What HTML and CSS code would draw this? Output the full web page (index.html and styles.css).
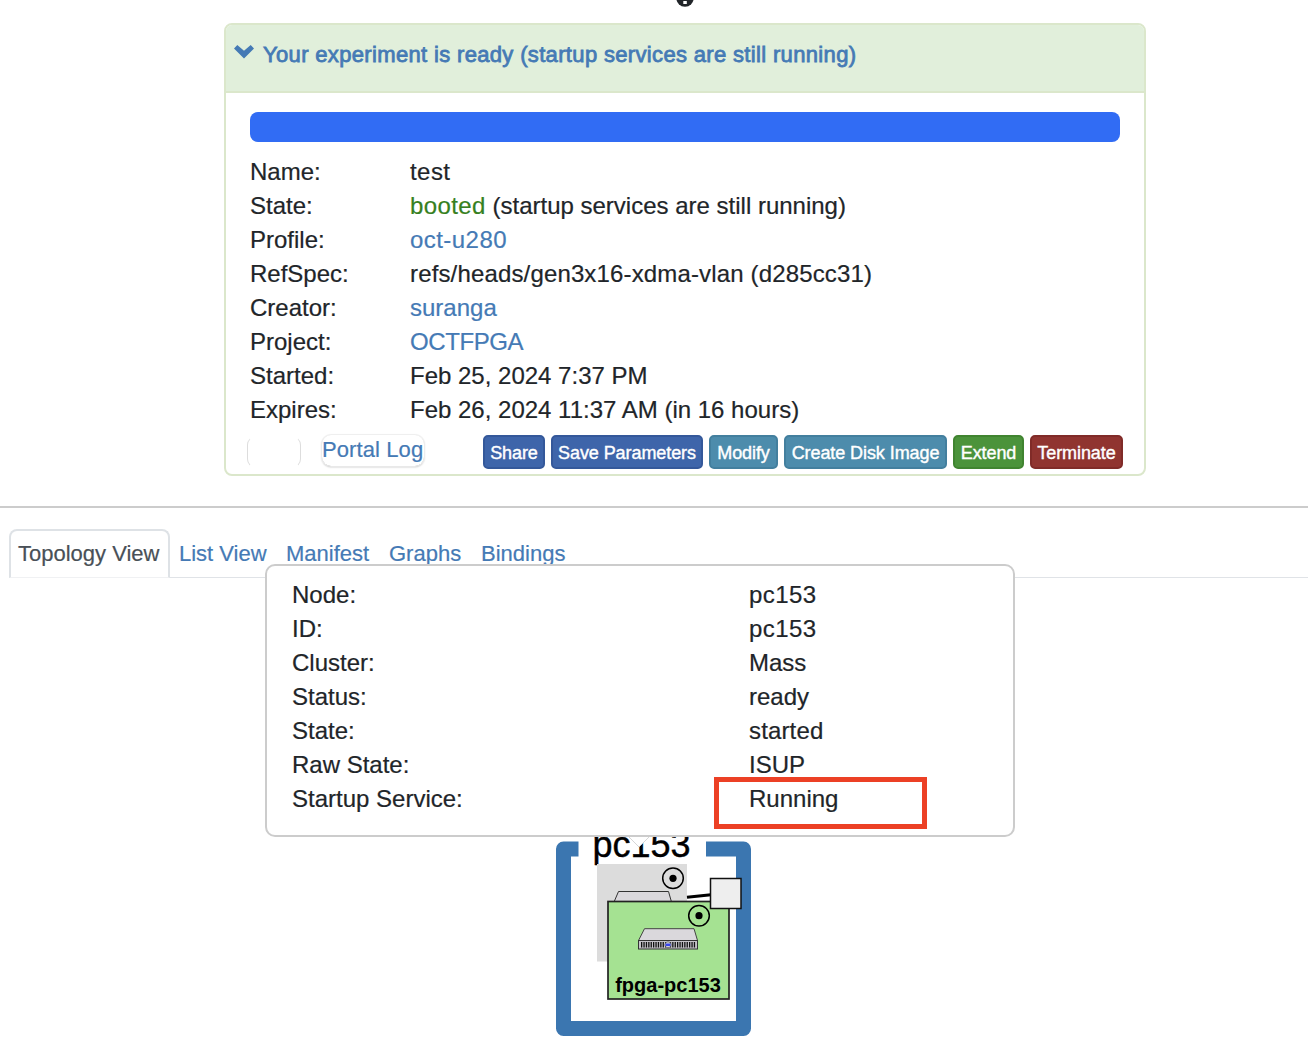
FILE: index.html
```html
<!DOCTYPE html>
<html lang="en">
<head>
<meta charset="utf-8">
<title>Experiment status</title>
<link rel="stylesheet" href="styles.css">
</head>
<body>
<header class="top">
  <svg class="info" width="18" height="8" viewBox="0 0 18 8"><circle cx="9" cy="-2" r="8.7" fill="#212529"/><rect x="7.3" y="1" width="3.5" height="3" fill="#fff"/></svg>
</header>
<section class="panel">
  <div class="panel-heading">
    <svg class="chevron" width="20" height="14" viewBox="0 0 20 14"><path d="M0 3.500 3.300 0 10 5.800 16.700 0 20 3.500 10 13.500Z" fill="#457ab5"/></svg>
    <a class="title">Your experiment is ready (startup services are still running)</a>
  </div>
  <div class="panel-body">
    <div class="progress"></div>
    <dl class="facts">
      <dt>Name:</dt><dd class="loose">test</dd>
      <dt>State:</dt><dd><span class="booted">booted</span> (startup services are still running)</dd>
      <dt>Profile:</dt><dd class="loose"><a>oct-u280</a></dd>
      <dt>RefSpec:</dt><dd class="spaced">refs/heads/gen3x16-xdma-vlan (d285cc31)</dd>
      <dt>Creator:</dt><dd><a>suranga</a></dd>
      <dt>Project:</dt><dd class="tight"><a>OCTFPGA</a></dd>
      <dt>Started:</dt><dd>Feb 25, 2024 7:37 PM</dd>
      <dt>Expires:</dt><dd>Feb 26, 2024 11:37 AM (in 16 hours)</dd>
    </dl>
    <div class="actions">
      <span class="blank"></span>
      <a class="log">Portal Log</a>
      <div class="buttons">
        <button class="btn primary w-share">Share</button>
        <button class="btn primary w-save">Save Parameters</button>
        <button class="btn info-btn w-modify">Modify</button>
        <button class="btn info-btn w-disk">Create Disk Image</button>
        <button class="btn success w-extend">Extend</button>
        <button class="btn danger w-term">Terminate</button>
      </div>
    </div>
  </div>
</section>
<hr class="rule">
<nav class="tabs">
  <a class="tab active">Topology View</a>
  <a class="tab w-list">List View</a>
  <a class="tab w-manifest">Manifest</a>
  <a class="tab w-graphs">Graphs</a>
  <a class="tab">Bindings</a>
</nav>
<main class="canvas">
  <svg class="topology" width="200" height="218" viewBox="553 826 200 218">
    <path d="M578.5 849H563.500V1028.500H743.500V849H706" fill="none" stroke="#3b76b0" stroke-width="15" stroke-linejoin="round"/>
    <text x="592.500" y="857" class="site">pc153</text>
    <rect x="597" y="864" width="90" height="97.500" fill="#dcdcdc"/>
    <path d="M614 902 618.500 891.500H668.500L671.500 902" fill="#dad8dc" stroke="#333" stroke-width="1"/>
    <circle cx="673" cy="878.300" r="10.300" fill="none" stroke="#000" stroke-width="1.500"/><circle cx="673" cy="878.300" r="3.600"/>
    <path d="M687 897.300 711 894.800" stroke="#000" stroke-width="3"/>
    <rect x="608" y="901.500" width="121" height="97.500" fill="#a5e292" stroke="#222" stroke-width="1.700"/>
    <rect x="710.500" y="878.500" width="30.500" height="30" fill="#eee" stroke="#111" stroke-width="1.500"/>
    <circle cx="699" cy="915.700" r="10.300" fill="none" stroke="#000" stroke-width="1.500"/><circle cx="699" cy="915.700" r="3.600"/>
    <path d="M638.500 940.500 644.500 928.700H694L697.500 940.500Z" fill="#dad8dc" stroke="#444" stroke-width="1"/>
    <rect x="638.500" y="940.500" width="59" height="8.500" fill="#c5c3c9" stroke="#333" stroke-width="1"/>
    <path d="M641 944.800H695.500" stroke="#111" stroke-width="5.500" stroke-dasharray="1.300 1.100"/>
    <circle cx="668" cy="944.800" r="3" fill="#ddd" stroke="#222" stroke-width=".5"/><path d="M665.500 944.800H670.500" stroke="#3944ef" stroke-width="2.600"/>
    <text x="668" y="992" class="node">fpga-pc153</text>
  </svg>
  <div class="popover">
    <dl class="node-facts">
      <dt>Node:</dt><dd class="loose">pc153</dd>
      <dt>ID:</dt><dd class="loose">pc153</dd>
      <dt>Cluster:</dt><dd>Mass</dd>
      <dt>Status:</dt><dd>ready</dd>
      <dt>State:</dt><dd class="spaced">started</dd>
      <dt>Raw State:</dt><dd>ISUP</dd>
      <dt>Startup Service:</dt><dd>Running</dd>
    </dl>
    <span class="highlight"></span>
    <svg class="arrow" width="24" height="11" viewBox="0 0 24 11"><path d="M2 0 12 10 22 0Z" fill="#fff"/><path d="M2 0 12 10 22 0" fill="none" stroke="#ccc" stroke-width=".8"/></svg>
  </div>
</main>
</body>
</html>
```
FILE: styles.css
```css
* { box-sizing: border-box; }
body {
  margin: 0;
  height: 1048px;
  overflow: hidden;
  background: #fff;
  color: #212529;
  font: 24px/34px "Liberation Sans", Arial, sans-serif;
  -webkit-text-stroke: .2px currentColor;
}
a { color: #457ab5; }
dl, dd { margin: 0; }
.top { height: 23px; }
.info { display: block; margin-left: 676px; }
.panel {
  width: 922px;
  height: 453px;
  margin-left: 224px;
  border: 2px solid #dbe7cb;
  border-radius: 8px;
}
.panel-heading {
  display: flex;
  height: 68px;
  padding: 13px 0 0 8px;
  background: #e1efdb;
  border-bottom: 2px solid #dbe7cb;
  border-radius: 6px 6px 0 0;
}
.chevron { margin: 7px 9px 0 0; }
.title {
  font-size: 22px;
  letter-spacing: .34px;
  white-space: nowrap;
  -webkit-text-stroke: .8px #457ab5;
}
.panel-body { padding: 19px 24px 0; }
.progress {
  height: 30px;
  margin-bottom: 13px;
  border-radius: 8px;
  background: #316cf4;
}
.facts {
  display: grid;
  grid-template-columns: 160px 1fr;
  grid-auto-rows: 34px;
  white-space: nowrap;
}
.spaced { letter-spacing: .15px; }
.loose { letter-spacing: .45px; }
.tight { letter-spacing: -.4px; }
.booted { color: #367f20; letter-spacing: .4px; }
.actions { display: flex; margin: 8px -3px 0; }
.blank {
  width: 54px;
  height: 32px;
  margin-top: 1px;
  border: 1px solid #ddd;
  border-top-color: transparent;
  border-bottom-color: transparent;
  border-radius: 9px;
}
.log {
  width: 102px;
  height: 31px;
  margin-left: 21px;
  border-radius: 9px;
  box-shadow: 0 0 1px 1px #eee, 0 1px 2px #aaa;
  font-size: 22px;
  line-height: 30px;
  letter-spacing: .1px;
  white-space: nowrap;
}
.buttons { display: flex; gap: 6px; margin-left: auto; }
.btn {
  height: 34px;
  padding: 2px 0 0;
  border: 2px solid;
  border-radius: 5px;
  color: #fff;
  font: 18px/28px "Liberation Sans", Arial, sans-serif;
  letter-spacing: -.08px;
  white-space: nowrap;
  -webkit-text-stroke: .4px #fff;
}
.primary { background: #3e65aa; border-color: #34589a; }
.info-btn { background: #4d8cac; border-color: #437f9e; }
.success { background: #4b933b; border-color: #408430; }
.danger { background: #903430; border-color: #802b28; }
.w-share { width: 62px; }
.w-save { width: 152px; }
.w-modify { width: 69px; }
.w-disk { width: 163px; }
.w-extend { width: 71px; }
.w-term { width: 93px; }
.rule { height: 2px; margin: 30px 0 21px; border: 0; background: #ccc; }
.tabs {
  display: flex;
  height: 49px;
  margin-left: 9px;
  border-bottom: 1px solid #e0e3e7;
  font-size: 22px;
  line-height: 30px;
}
.tab { height: 49px; padding: 10px 0 0 9px; white-space: nowrap; }
.tab.active {
  width: 161px;
  padding: 8px 0 0 7px;
  border: 2px solid #dee2e6;
  border-bottom: 1px solid #f0f1f3;
  border-radius: 8px 8px 0 0;
  background: #fff;
  color: #495057;
}
.w-list { width: 107px; }
.w-manifest { width: 103px; }
.w-graphs { width: 92px; }
.canvas { position: relative; height: 470px; }
.topology { position: absolute; left: 553px; top: 248px; }
.site { font: 36px "Liberation Sans", Arial, sans-serif; stroke: #000; stroke-width: .4px; }
.node { font: bold 20px "Liberation Sans", Arial, sans-serif; text-anchor: middle; }
.popover {
  position: absolute;
  left: 265px;
  top: -14px;
  width: 750px;
  height: 273px;
  padding: 12px 0 0 25px;
  border: 2px solid #ccc;
  border-radius: 10px;
  background: #fff;
}
.node-facts {
  display: grid;
  grid-template-columns: 457px 1fr;
  grid-auto-rows: 34px;
}
.highlight {
  position: absolute;
  left: 446.5px;
  top: 210.5px;
  width: 213px;
  height: 52px;
  border: 5px solid #ec4025;
}
.arrow { position: absolute; left: 360px; top: 271px; }
```
